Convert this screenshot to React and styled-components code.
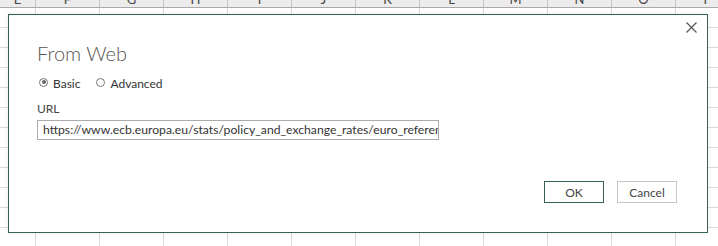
import React from "react";
import styled, { createGlobalStyle } from "styled-components";

const GlobalStyle = createGlobalStyle`
  html, body {
    margin: 0;
    padding: 0;
    overflow: hidden;
    background: #ffffff;
    font-family: Lato, "Open Sans", sans-serif;
  }
`;

const COLUMNS = ["E", "F", "G", "H", "I", "J", "K", "L", "M", "N", "O", "P"];
const ROWS = 12;

const Screen = styled.div`
  position: relative;
  width: 718px;
  height: 246px;
  overflow: hidden;
`;

const Sheet = styled.div`
  display: grid;
  grid-template-columns: 36px repeat(11, 64px);
  grid-auto-rows: 20px;
  margin-top: -12px;
`;

const HeaderCell = styled.div`
  box-sizing: border-box;
  background: #ececec;
  border-right: 1px solid #c6c6c6;
  border-bottom: 1px solid #a9a9a9;
  padding-top: 3px;
  text-align: center;
  font-size: 13px;
  line-height: 16px;
  color: #444;
  overflow: hidden;
`;

const Cell = styled.div`
  box-sizing: border-box;
  border-right: 1px solid #dadada;
  border-bottom: 1px solid #dadada;
`;

const Dialog = styled.div`
  position: absolute;
  left: 8px;
  top: 14px;
  width: 700px;
  height: 219px;
  box-sizing: border-box;
  background: #ffffff;
  border: 1px solid #35614f;
  box-shadow: 0 0 6px rgba(0, 0, 0, 0.08);
  display: flex;
  flex-direction: column;
  padding: 0 30px 29px 28px;
  color: #333;
`;

const CloseRow = styled.div`
  display: flex;
  justify-content: flex-end;
  padding-top: 6px;
  margin-right: -20px;
`;

const CloseButton = styled.button`
  width: 11px;
  height: 11px;
  padding: 0;
  border: none;
  background: none;
  display: block;
  cursor: pointer;
`;

const Title = styled.h1`
  margin: 9px 0 0;
  font-size: 20px;
  line-height: 24px;
  font-weight: 300;
  color: #555;
`;

const RadioGroup = styled.div`
  display: flex;
  align-items: center;
  margin-top: 10px;
  height: 16px;
  font-size: 12px;
`;

const RadioOption = styled.label`
  display: flex;
  align-items: center;
  gap: 5px;
  margin-right: 14px;
  margin-left: 2px;
`;

const RadioDot = styled.span`
  position: relative;
  top: -1px;
  width: 9px;
  height: 9px;
  box-sizing: border-box;
  border-radius: 50%;
  border: 1px solid #777;
  background: #fff;

  &::after {
    content: "";
    position: absolute;
    inset: 1.5px;
    border-radius: 50%;
    background: ${({ $checked }) => ($checked ? "#666" : "transparent")};
  }
`;

const FieldLabel = styled.div`
  margin-top: 10px;
  font-size: 12px;
  line-height: 16px;
  color: #444;
`;

const UrlBox = styled.div`
  margin-top: 3px;
  width: 402px;
  height: 20px;
  box-sizing: border-box;
  border: 1px solid #ababab;
  padding: 0 0 0 5px;
  font-size: 12.2px;
  line-height: 18px;
  color: #333;
  white-space: nowrap;
  overflow: hidden;
`;

const Footer = styled.div`
  margin-top: auto;
  display: flex;
  justify-content: flex-end;
  gap: 13px;
`;

const Button = styled.button`
  width: 60px;
  height: 22px;
  box-sizing: border-box;
  background: #fff;
  border: 1px solid ${({ $primary }) => ($primary ? "#35614f" : "#c6c6c6")};
  font-family: Lato, "Open Sans", sans-serif;
  font-size: 12px;
  color: #444;
  padding: 0;
`;

export default function App() {
  return (
    <>
      <GlobalStyle />
      <Screen>
        <Sheet>
          {COLUMNS.map((c) => (
            <HeaderCell key={c}>{c}</HeaderCell>
          ))}
          {Array.from({ length: ROWS * COLUMNS.length }).map((_, i) => (
            <Cell key={i} />
          ))}
        </Sheet>

        <Dialog>
          <CloseRow>
            <CloseButton aria-label="Close">
              <svg width="11" height="11" viewBox="0 0 11 11">
                <path d="M0.5 0.5 L10.5 10.5 M10.5 0.5 L0.5 10.5" stroke="#555" strokeWidth="1.2" fill="none" />
              </svg>
            </CloseButton>
          </CloseRow>
          <Title>From Web</Title>
          <RadioGroup>
            <RadioOption>
              <RadioDot $checked />
              Basic
            </RadioOption>
            <RadioOption>
              <RadioDot />
              Advanced
            </RadioOption>
          </RadioGroup>
          <FieldLabel>URL</FieldLabel>
          <UrlBox>https://www.ecb.europa.eu/stats/policy_and_exchange_rates/euro_reference_exchange_rates/html/index.en.html</UrlBox>
          <Footer>
            <Button $primary>OK</Button>
            <Button>Cancel</Button>
          </Footer>
        </Dialog>
      </Screen>
    </>
  );
}
